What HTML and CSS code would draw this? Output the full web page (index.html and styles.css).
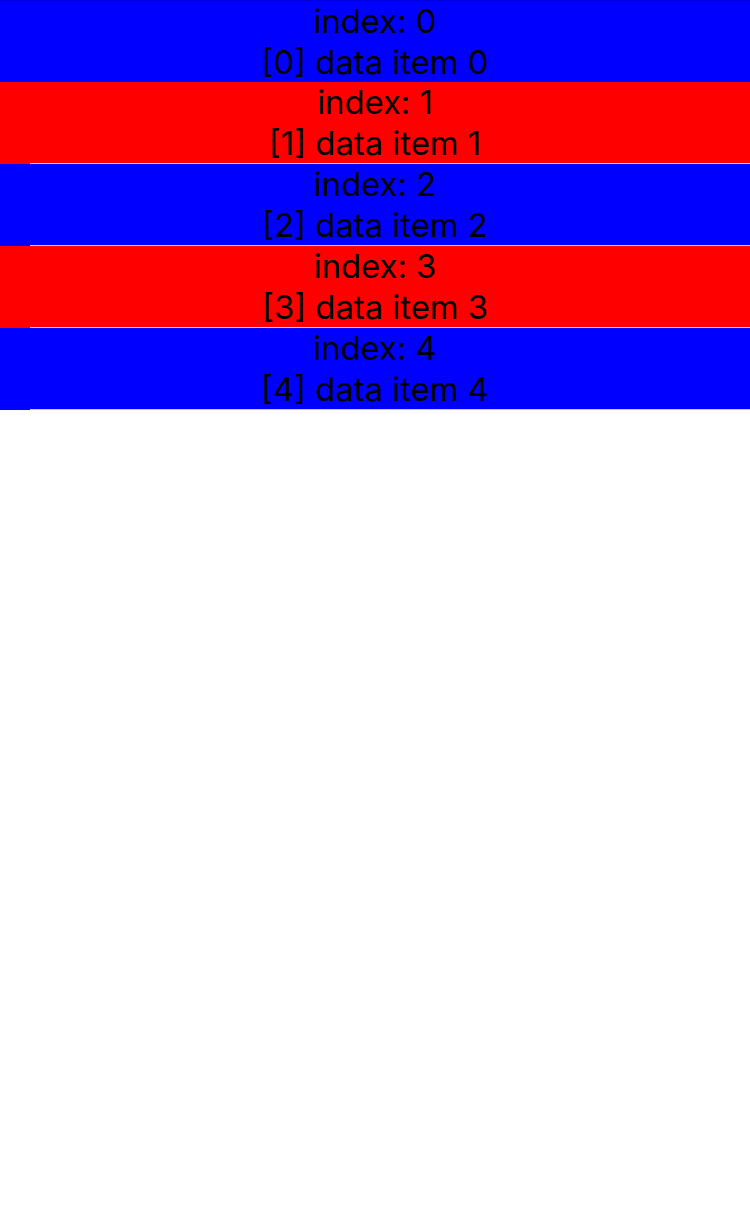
FILE: index.html
```html
<!DOCTYPE html>
<html>
<head>
<meta charset="utf-8">
<link rel="stylesheet" href="styles.css">
</head>
<body>
<div class="list">
  <div class="row blue">
    <div class="text"><div class="line">index: 0</div><div class="line">[0] data item 0</div></div>
    <div class="sep"></div>
  </div>
  <div class="row red">
    <div class="text"><div class="line">index: 1</div><div class="line">[1] data item 1</div></div>
    <div class="sep"></div>
  </div>
  <div class="row blue">
    <div class="text"><div class="line">index: 2</div><div class="line">[2] data item 2</div></div>
    <div class="sep"></div>
  </div>
  <div class="row red">
    <div class="text"><div class="line">index: 3</div><div class="line">[3] data item 3</div></div>
    <div class="sep"></div>
  </div>
  <div class="row blue">
    <div class="text"><div class="line">index: 4</div><div class="line">[4] data item 4</div></div>
    <div class="sep"></div>
  </div>
</div>
</body>
</html>
```
FILE: styles.css
```css
html, body {
  margin: 0;
  padding: 0;
  background: #ffffff;
}
.list {
  display: flex;
  flex-direction: column;
  border-top: 1px solid #0000d8;
}
.row {
  display: flex;
  flex-direction: column;
  height: 82px;
}
.list .row:first-child { height: 81px; }
.blue { background: #0000ff; }
.red { background: #ff0000; }
.text {
  flex: 1;
  display: flex;
  flex-direction: column;
  justify-content: center;
  align-items: center;
  font-family: "Inter", "Liberation Sans", sans-serif;
  font-size: 32.8px;
  color: #000000;
}
.line {
  line-height: 40.5px;
}
.sep {
  height: 1px;
  margin-left: 30px;
  background: #c8c7e0;
}
.red .sep { background: #e8c8d8; }
```
